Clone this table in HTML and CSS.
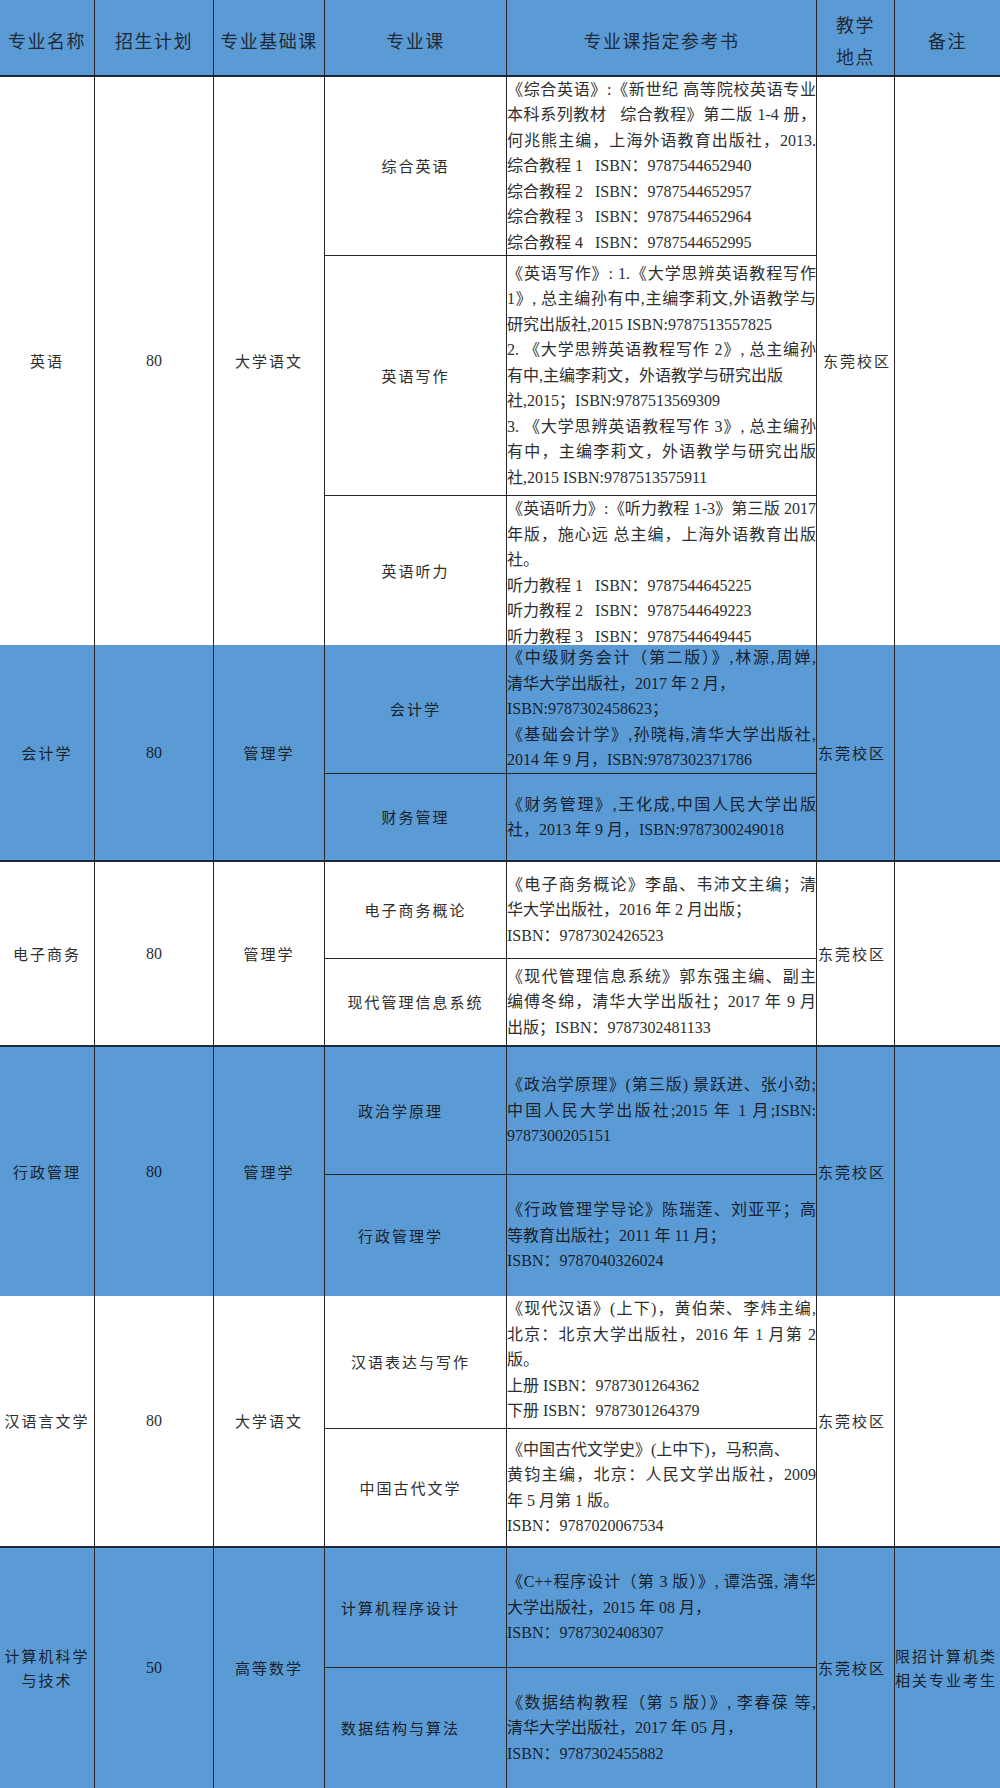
FILE: index.html
```html
<!DOCTYPE html>
<html lang="zh-CN">
<head>
<meta charset="utf-8">
<title>招生计划</title>
<link rel="stylesheet" href="styles.css">
</head>
<body>
<div class="sheet">
  <div class="c h">专业名称</div>
  <div class="c h">招生计划</div>
  <div class="c h">专业基础课</div>
  <div class="c h">专业课</div>
  <div class="c h">专业课指定参考书</div>
  <div class="c h">教学<br>地点</div>
  <div class="c h last">备注</div>

  <div class="c lab r3">英语</div>
  <div class="c num r3">80</div>
  <div class="c lab r3">大学语文</div>
  <div class="c lab sb">综合英语</div>
  <div class="c book sb">
    <div class="j">《综合英语》:《新世纪 高等院校英语专业</div>
    <div class="j">本科系列教材&nbsp;&nbsp; 综合教程》第二版 1-4 册，</div>
    <div class="j">何兆熊主编，上海外语教育出版社，2013.</div>
    <div>综合教程 1&nbsp;&nbsp; ISBN：9787544652940</div>
    <div>综合教程 2&nbsp;&nbsp; ISBN：9787544652957</div>
    <div>综合教程 3&nbsp;&nbsp; ISBN：9787544652964</div>
    <div>综合教程 4&nbsp;&nbsp; ISBN：9787544652995</div>
  </div>
  <div class="c lab loc first r3">东莞校区</div>
  <div class="c lab rem last r3"></div>
  <div class="c lab sb">英语写作</div>
  <div class="c book sb">
    <div class="j">《英语写作》: 1.《大学思辨英语教程写作</div>
    <div class="j">1》, 总主编孙有中,主编李莉文,外语教学与</div>
    <div>研究出版社,2015 ISBN:9787513557825</div>
    <div class="j">2. 《大学思辨英语教程写作 2》, 总主编孙</div>
    <div>有中,主编李莉文，外语教学与研究出版</div>
    <div>社,2015；ISBN:9787513569309</div>
    <div class="j">3. 《大学思辨英语教程写作 3》, 总主编孙</div>
    <div class="j">有中，主编李莉文，外语教学与研究出版</div>
    <div>社,2015 ISBN:9787513575911</div>
  </div>
  <div class="c lab">英语听力</div>
  <div class="c book top">
    <div class="j">《英语听力》:《听力教程 1-3》第三版 2017</div>
    <div class="j">年版，施心远 总主编，上海外语教育出版</div>
    <div>社。</div>
    <div>听力教程 1&nbsp;&nbsp; ISBN：9787544645225</div>
    <div>听力教程 2&nbsp;&nbsp; ISBN：9787544649223</div>
    <div>听力教程 3&nbsp;&nbsp; ISBN：9787544649445</div>
  </div>

  <div class="c lab blue gb r2">会计学</div>
  <div class="c num blue gb r2">80</div>
  <div class="c lab blue gb r2">管理学</div>
  <div class="c lab blue sb">会计学</div>
  <div class="c book blue sb">
    <div class="j">《中级财务会计（第二版）》,林源,周婵,</div>
    <div>清华大学出版社，2017 年 2 月，</div>
    <div>ISBN:9787302458623；</div>
    <div class="j">《基础会计学》,孙晓梅,清华大学出版社,</div>
    <div>2014 年 9 月，ISBN:9787302371786</div>
  </div>
  <div class="c lab loc blue gb r2">东莞校区</div>
  <div class="c lab rem blue gb last r2"></div>
  <div class="c lab blue gb">财务管理</div>
  <div class="c book blue gb">
    <div class="j">《财务管理》,王化成,中国人民大学出版</div>
    <div>社，2013 年 9 月，ISBN:9787300249018</div>
  </div>

  <div class="c lab gb r2">电子商务</div>
  <div class="c num gb r2">80</div>
  <div class="c lab gb r2">管理学</div>
  <div class="c lab sb">电子商务概论</div>
  <div class="c book sb">
    <div class="j">《电子商务概论》李晶、韦沛文主编；清</div>
    <div>华大学出版社，2016 年 2 月出版；</div>
    <div>ISBN：9787302426523</div>
  </div>
  <div class="c lab loc gb r2">东莞校区</div>
  <div class="c lab rem gb last r2"></div>
  <div class="c lab gb">现代管理信息系统</div>
  <div class="c book gb">
    <div class="j">《现代管理信息系统》郭东强主编、副主</div>
    <div class="j">编傅冬绵，清华大学出版社；2017 年 9 月</div>
    <div>出版；ISBN：9787302481133</div>
  </div>

  <div class="c lab blue r2">行政管理</div>
  <div class="c num blue r2">80</div>
  <div class="c lab blue r2">管理学</div>
  <div class="c lab blue sb shift">政治学原理</div>
  <div class="c book blue sb">
    <div class="j">《政治学原理》(第三版) 景跃进、张小劲;</div>
    <div class="j">中国人民大学出版社;2015 年 1 月;ISBN:</div>
    <div>9787300205151</div>
  </div>
  <div class="c lab loc blue r2">东莞校区</div>
  <div class="c lab rem blue last r2"></div>
  <div class="c lab blue shift">行政管理学</div>
  <div class="c book blue">
    <div class="j">《行政管理学导论》陈瑞莲、刘亚平；高</div>
    <div>等教育出版社；2011 年 11 月；</div>
    <div>ISBN：9787040326024</div>
  </div>

  <div class="c lab gb r2">汉语言文学</div>
  <div class="c num gb r2">80</div>
  <div class="c lab gb r2">大学语文</div>
  <div class="c lab sb shift-s">汉语表达与写作</div>
  <div class="c book sb top">
    <div class="j">《现代汉语》(上下)，黄伯荣、李炜主编,</div>
    <div class="j">北京：北京大学出版社，2016 年 1 月第 2</div>
    <div>版。</div>
    <div>上册 ISBN：9787301264362</div>
    <div>下册 ISBN：9787301264379</div>
  </div>
  <div class="c lab loc gb r2">东莞校区</div>
  <div class="c lab rem gb last r2"></div>
  <div class="c lab gb shift-s">中国古代文学</div>
  <div class="c book gb">
    <div>《中国古代文学史》(上中下)，马积高、</div>
    <div class="j">黄钧主编，北京：人民文学出版社，2009</div>
    <div>年 5 月第 1 版。</div>
    <div>ISBN：9787020067534</div>
  </div>

  <div class="c lab blue r2">计算机科学<br>与技术</div>
  <div class="c num blue r2">50</div>
  <div class="c lab blue r2">高等数学</div>
  <div class="c lab blue sb shift">计算机程序设计</div>
  <div class="c book blue sb">
    <div class="j">《C++程序设计（第 3 版）》, 谭浩强, 清华</div>
    <div>大学出版社，2015 年 08 月，</div>
    <div>ISBN：9787302408307</div>
  </div>
  <div class="c lab loc blue r2">东莞校区</div>
  <div class="c lab rem blue last r2">限招计算机类<br>相关专业考生</div>
  <div class="c lab blue shift">数据结构与算法</div>
  <div class="c book blue">
    <div class="j">《数据结构教程（第 5 版）》, 李春葆 等,</div>
    <div>清华大学出版社，2017 年 05 月，</div>
    <div>ISBN：9787302455882</div>
  </div>
</div>
</body>
</html>
```

FILE: styles.css
```css
* {
  box-sizing: border-box;
  margin: 0;
  padding: 0;
}

html,
body {
  background: #ffffff;
}

body {
  margin: 0;
  font-family: "Liberation Serif", "Noto Sans CJK SC", serif;
  color: #2e2e2e;
}

.sheet {
  display: grid;
  width: 1000px;
  grid-template-columns: 95px 119px 111px 182px 310px 78px 105px;
  grid-template-rows: 77px 179px 240px 149px 129px 88px 97px 88px 128px 121px 133px 119px 120px 120px;
}

.c {
  display: flex;
  align-items: center;
  justify-content: center;
  overflow: hidden;
  min-width: 0;
  min-height: 0;
  border-right: 1px solid #262626;
}

.c.last {
  border-right: none;
}

.h {
  background: #5b9bd5;
  border-bottom: 2px solid #1b2430;
  font-family: "Noto Sans CJK SC", sans-serif;
  font-size: 18px;
  letter-spacing: 1.5px;
  line-height: 32px;
  color: #1e2a38;
  text-align: center;
  padding-top: 4px;
}

.lab {
  font-family: "Noto Sans CJK SC", sans-serif;
  font-size: 15px;
  letter-spacing: 2px;
  line-height: 24px;
  text-align: center;
}

.num {
  font-family: "Liberation Serif", serif;
  font-size: 16px;
}

.book {
  flex-direction: column;
  align-items: stretch;
  justify-content: center;
  font-size: 16px;
  line-height: 25.5px;
}

.book.top {
  justify-content: flex-start;
}

.book > div {
  white-space: nowrap;
}

.book > .j {
  text-align: justify;
  text-align-last: justify;
}

.loc {
  justify-content: flex-start;
  padding-left: 1px;
}

.loc.first {
  padding-left: 6px;
}

.rem {
  justify-content: flex-start;
  text-align: left;
}

.shift {
  padding-right: 30px;
}

.shift-s {
  padding-right: 10px;
}

.blue {
  background: #5b9bd5;
  color: #18222e;
}

.sb {
  border-bottom: 1px solid #262626;
}

.gb {
  border-bottom: 2px solid #1c2a3a;
}

.r2 {
  grid-row: span 2;
}

.r3 {
  grid-row: span 3;
}
```
